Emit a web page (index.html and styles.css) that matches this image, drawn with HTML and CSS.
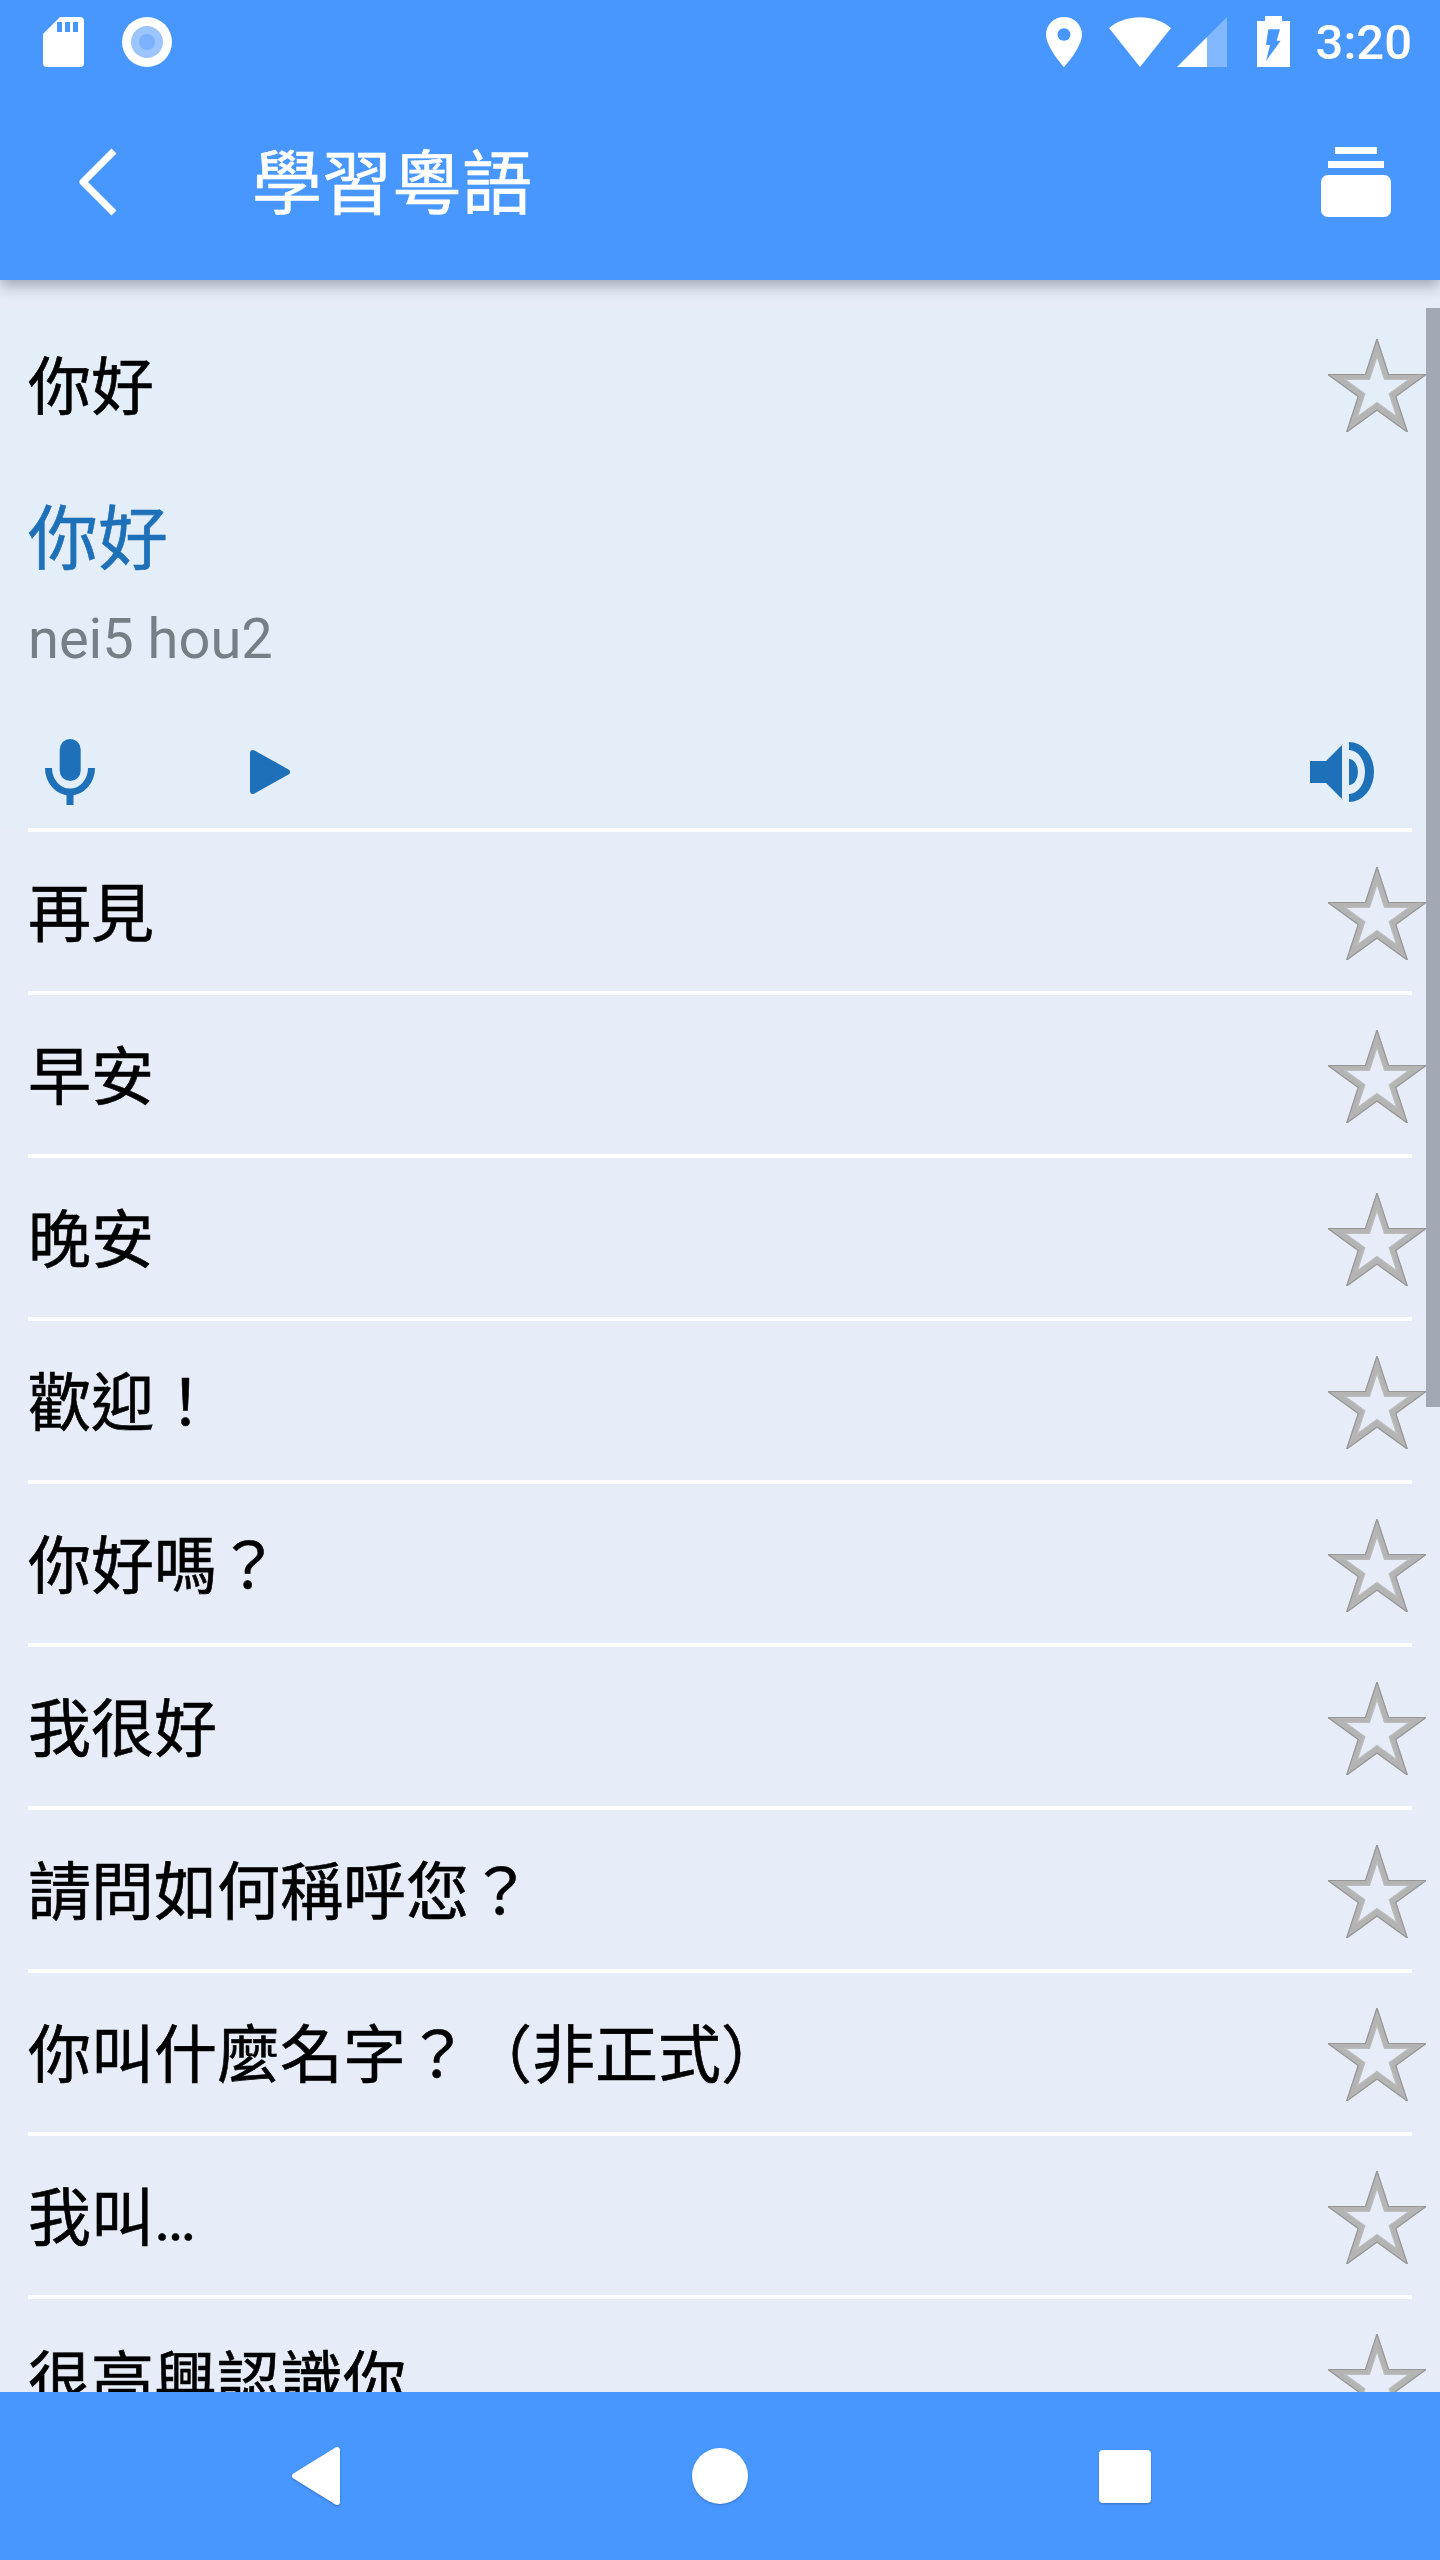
FILE: index.html
```html
<!DOCTYPE html>
<html lang="zh-Hant">
<head>
  <meta charset="UTF-8" />
  <meta name="viewport" content="width=device-width, initial-scale=1.0" />
  <title>學習粵語</title>
  <link rel="stylesheet" href="styles.css">
</head>
<body>
  <svg class="defs" width="0" height="0">
    <symbol id="star" viewBox="0 0 98 93">
      <path class="star-band" fill-rule="evenodd" d="M49 0L60.5 35.5H98L67.7 57.5L79.3 93L49 71L18.7 93L30.3 57.5L0 35.5H37.5ZM49 17.3L41.5 40.4H17.1L36.8 54.7L29.3 77.8L49 63.5L68.7 77.8L61.2 54.7L80.9 40.4H56.5Z"/>
      <path class="star-edge" d="M49 0L60.5 35.5H98L67.7 57.5L79.3 93L49 71L18.7 93L30.3 57.5L0 35.5H37.5Z"/>
    </symbol>
  </svg>

  <header class="app-header">
    <div class="status-bar">
      <svg class="sd-icon" width="41" height="50" viewBox="0 0 41 50"><path fill-rule="evenodd" d="M17 0H37a4 4 0 0 1 4 4V46a4 4 0 0 1-4 4H4a4 4 0 0 1-4-4V17ZM14 5V15H19V5ZM22 5V15H27V5ZM30 5V15H35V5Z"/></svg>
      <div class="record-dot"><div class="record-mid"><div class="record-core"></div></div></div>
      <svg class="pin-icon" width="36" height="50" viewBox="5 2 14 20" preserveAspectRatio="none"><path d="M12 2C8.13 2 5 5.13 5 9c0 5.25 7 13 7 13s7-7.75 7-13c0-3.87-3.13-7-7-7zm0 9.5c-1.38 0-2.5-1.12-2.5-2.5s1.12-2.5 2.5-2.5 2.5 1.12 2.5 2.5-1.12 2.5-2.5 2.5z"/></svg>
      <svg class="wifi-icon" width="62" height="50" viewBox="0 0 62 50"><path d="M0 11C17-3.5 45-3.5 62 11L31 50Z"/></svg>
      <svg class="signal-icon" width="50" height="50" viewBox="0 0 50 50"><path d="M0 50L30 20V50Z"/><path opacity=".32" d="M30 20L50 0V50H30Z"/></svg>
      <svg class="battery-icon" width="33" height="51" viewBox="0 0 33 51"><path fill-rule="evenodd" d="M8 0H25V5H33V51H0V5H8ZM11.3 13.300L9 29H13L9 45L23.700 24.700H19.700L23 13.300Z"/></svg>
      <span class="clock">3:20</span>
    </div>
    <div class="toolbar">
      <svg class="back-icon" width="40" height="68" viewBox="0 0 40 68"><path d="M36 3L5 34L36 65"/></svg>
      <h1 class="toolbar-title">學習粵語</h1>
      <svg class="archive-icon" width="70" height="70" viewBox="0 0 70 70"><path d="M14 0H56V7H14ZM7 14H63V21H7Z"/><rect y="28" width="70" height="42" rx="7"/></svg>
    </div>
  </header>

  <main class="phrase-list">
    <div class="scroll-thumb"></div>

    <section class="phrase-open">
      <div class="phrase phrase-head">
        <span class="phrase-text">你好</span>
        <svg class="star"><use href="#star"/></svg>
      </div>
      <div class="answer">你好</div>
      <div class="romanization">nei5 hou2</div>
      <div class="controls">
        <svg class="mic-icon" width="50" height="66" viewBox="0 0 50 66"><rect x="14.700" width="21" height="42" rx="10.500"/><path class="mic-arc" d="M3.500 29a21.500 24 0 0 0 43 0"/><rect x="21.500" y="52" width="7" height="14"/></svg>
        <svg class="play-icon" width="40" height="44" viewBox="0 0 40 44"><path d="M3 3L37 22L3 41Z"/></svg>
        <svg class="speaker-icon" width="64" height="60" viewBox="0 0 64 60"><path d="M0 19H16L32 3V57L16 41H0ZM39 17A9 13 0 0 1 39 43ZM39 0A25 30 0 0 1 39 60V52A16 22 0 0 0 39 8Z"/></svg>
      </div>
    </section>
    <hr class="rule">

    <div class="phrase"><span class="phrase-text">再見</span><svg class="star"><use href="#star"/></svg></div>
    <hr class="rule">
    <div class="phrase"><span class="phrase-text">早安</span><svg class="star"><use href="#star"/></svg></div>
    <hr class="rule">
    <div class="phrase"><span class="phrase-text">晚安</span><svg class="star"><use href="#star"/></svg></div>
    <hr class="rule">
    <div class="phrase"><span class="phrase-text">歡迎！</span><svg class="star"><use href="#star"/></svg></div>
    <hr class="rule">
    <div class="phrase"><span class="phrase-text">你好嗎？</span><svg class="star"><use href="#star"/></svg></div>
    <hr class="rule">
    <div class="phrase"><span class="phrase-text">我很好</span><svg class="star"><use href="#star"/></svg></div>
    <hr class="rule">
    <div class="phrase"><span class="phrase-text">請問如何稱呼您？</span><svg class="star"><use href="#star"/></svg></div>
    <hr class="rule">
    <div class="phrase"><span class="phrase-text">你叫什麼名字？（非正式）</span><svg class="star"><use href="#star"/></svg></div>
    <hr class="rule">
    <div class="phrase"><span class="phrase-text">我叫…</span><svg class="star"><use href="#star"/></svg></div>
    <hr class="rule">
    <div class="phrase"><span class="phrase-text">很高興認識你</span><svg class="star"><use href="#star"/></svg></div>
  </main>

  <nav class="nav-bar">
    <svg class="nav-back" width="50" height="58" viewBox="0 0 50 58"><path d="M4 29L46 3V55Z"/></svg>
    <div class="nav-home"></div>
    <div class="nav-recent"></div>
  </nav>
</body>
</html>
```

FILE: styles.css
```css
html, body {
  margin: 0;
  height: 100%;
}
body {
  width: 1440px;
  height: 2560px;
  display: flex;
  flex-direction: column;
  overflow: hidden;
  background: #e6edf8;
  font-family: Roboto, "Noto Sans CJK TC", sans-serif;
}
.defs {
  position: absolute;
}

/* top bars */
.app-header {
  height: 280px;
  flex: none;
  position: relative;
  z-index: 2;
  background: #4897fe;
  box-shadow: 0 5px 14px rgba(40, 50, 70, 0.4);
  color: #fff;
}
.app-header svg {
  display: block;
  flex: none;
  fill: #fff;
}
.status-bar {
  height: 84px;
  box-sizing: border-box;
  padding: 17px 28px 0 43px;
  display: flex;
  align-items: flex-start;
}
.record-dot {
  width: 50px;
  height: 50px;
  margin-left: 38px;
  border-radius: 50%;
  background: #fff;
  display: flex;
  align-items: center;
  justify-content: center;
}
.record-mid {
  width: 32px;
  height: 32px;
  border-radius: 50%;
  background: #9cc5fe;
  display: flex;
  align-items: center;
  justify-content: center;
}
.record-core {
  width: 16px;
  height: 16px;
  border-radius: 50%;
  background: #7cb1fe;
}
.app-header .pin-icon {
  margin-left: auto;
}
.app-header .wifi-icon {
  margin-left: 27px;
}
.app-header .signal-icon {
  margin-left: 6px;
}
.app-header .battery-icon {
  margin: -1px 0 0 30px;
}
.clock {
  margin-left: 26px;
  font-size: 49px;
  font-weight: 500;
  line-height: 50px;
  margin-top: 1px;
}
.toolbar {
  height: 196px;
  box-sizing: border-box;
  padding: 0 49px 0 78px;
  display: flex;
  align-items: center;
}
.app-header .back-icon {
  fill: none;
  stroke: #fff;
  stroke-width: 7;
  stroke-linejoin: round;
}
.toolbar-title {
  margin: 6px 0 0 134px;
  font-size: 70px;
  font-weight: 400;
  line-height: 100px;
  -webkit-text-stroke: 0.6px currentColor;
}
.app-header .archive-icon {
  margin-left: auto;
}

/* list */
.phrase-list {
  flex: 1;
  position: relative;
  overflow: hidden;
  padding-top: 28px;
}
.scroll-thumb {
  position: absolute;
  top: 28px;
  right: 0;
  width: 14px;
  height: 1099px;
  background: #a2a9b4;
}
.phrase-open {
  height: 520px;
  background: #e3eef8;
}
.phrase {
  height: 159px;
  box-sizing: border-box;
  padding: 0 14px 0 28px;
  display: flex;
  align-items: center;
  justify-content: space-between;
}
.phrase-head {
  height: 154px;
}
.phrase-head .star {
  margin-top: 0;
}
.phrase-text {
  margin-top: 6px;
  font-size: 63px;
  line-height: 90px;
  color: #000;
  -webkit-text-stroke: 0.6px currentColor;
}
.star {
  width: 98px;
  height: 93px;
  flex: none;
  margin-top: 4px;
}
.star-band {
  fill: #b4b4b4;
  stroke: #bcbcbc;
  stroke-width: 1.2;
}
.star-edge {
  fill: none;
  stroke: #969696;
  stroke-width: 1.2;
}
.answer {
  margin: 28px 0 0 28px;
  font-size: 70px;
  line-height: 100px;
  color: #1e70b8;
  -webkit-text-stroke: 0.6px currentColor;
}
.romanization {
  margin: 9px 0 0 28px;
  font-size: 56px;
  line-height: 80px;
  color: #767e86;
}
.controls {
  height: 100px;
  margin-top: 43px;
  padding: 0 66px 0 45px;
  display: flex;
  align-items: center;
  fill: #1e70b8;
}
.play-icon {
  margin-left: 155px;
}
.play-icon path {
  stroke: #1e70b8;
  stroke-width: 6;
  stroke-linejoin: round;
}
.mic-arc {
  fill: none;
  stroke: #1e70b8;
  stroke-width: 7;
}
.speaker-icon {
  margin-left: auto;
}
.rule {
  height: 4px;
  margin: 0 28px;
  border: 0;
  background: #fff;
}

/* bottom nav */
.nav-bar {
  height: 168px;
  flex: none;
  position: relative;
  z-index: 2;
  box-sizing: border-box;
  padding-left: 291px;
  display: flex;
  align-items: center;
  gap: 351px;
  background: #4897fe;
}
.nav-back {
  fill: #fff;
  stroke: #fff;
  stroke-width: 6;
  stroke-linejoin: round;
  filter: drop-shadow(0 1px 1px rgba(0, 0, 0, 0.25));
}
.nav-home {
  width: 56px;
  height: 56px;
  border-radius: 50%;
  background: #fff;
  box-shadow: 0 1px 2px rgba(0, 0, 0, 0.25);
}
.nav-recent {
  width: 52px;
  height: 53px;
  border-radius: 4px;
  background: #fff;
  box-shadow: 0 1px 2px rgba(0, 0, 0, 0.25);
}
```
